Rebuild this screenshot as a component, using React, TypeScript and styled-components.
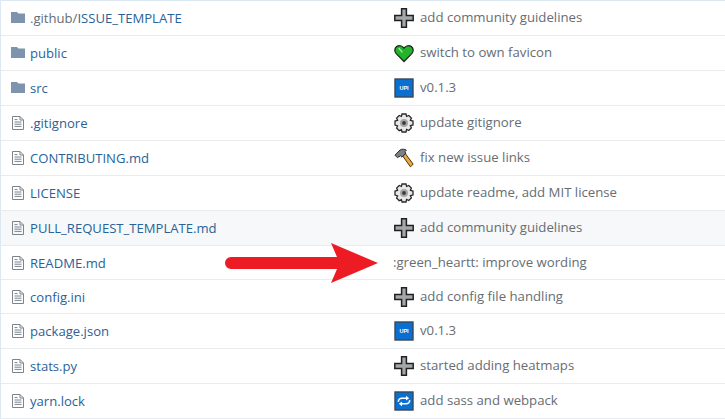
import React from 'react';
import styled, { createGlobalStyle } from 'styled-components';

type Emoji = 'plus' | 'heart' | 'package' | 'gear' | 'hammer' | 'loop';

type Entry = {
  name: string;
  prefix?: string;
  folder?: boolean;
  emoji?: Emoji;
  message: string;
  hovered?: boolean;
  compact?: boolean;
};

const entries: Entry[] = [
  { name: 'ISSUE_TEMPLATE', prefix: '.github/', folder: true, emoji: 'plus', message: 'add community guidelines' },
  { name: 'public', folder: true, emoji: 'heart', message: 'switch to own favicon' },
  { name: 'src', folder: true, emoji: 'package', message: 'v0.1.3' },
  { name: '.gitignore', emoji: 'gear', message: 'update gitignore' },
  { name: 'CONTRIBUTING.md', emoji: 'hammer', message: 'fix new issue links' },
  { name: 'LICENSE', emoji: 'gear', message: 'update readme, add MIT license' },
  { name: 'PULL_REQUEST_TEMPLATE.md', emoji: 'plus', message: 'add community guidelines', hovered: true },
  { name: 'README.md', message: ':green_heartt: improve wording', compact: true },
  { name: 'config.ini', emoji: 'plus', message: 'add config file handling', compact: true },
  { name: 'package.json', emoji: 'package', message: 'v0.1.3' },
  { name: 'stats.py', emoji: 'plus', message: 'started adding heatmaps' },
  { name: 'yarn.lock', emoji: 'loop', message: 'add sass and webpack' },
];

const GlobalStyle = createGlobalStyle`
  html, body {
    margin: 0;
    padding: 0;
    background: #fff;
    overflow: hidden;
  }
`;

const FileTable = styled.div`
  position: relative;
  width: 725px;
  height: 419px;
  box-sizing: border-box;
  border-top: 1px solid #dce8f2;
  border-left: 1px solid #dce8f2;
  font-family: 'Open Sans', 'Noto Sans', sans-serif;
  font-size: 13.1px;
  line-height: 20px;
`;

const Row = styled.div<{ $hovered?: boolean; $compact?: boolean }>`
  display: grid;
  grid-template-columns: 389px 1fr;
  align-items: center;
  height: ${p => (p.$compact ? '34px' : '35px')};
  box-sizing: border-box;
  border-bottom: 1px solid #e9ecef;
  background: ${p => (p.$hovered ? '#f6f8fa' : '#fff')};
`;

const NameCell = styled.div`
  display: flex;
  align-items: center;
  gap: 5px;
  padding-left: 10px;
  color: #2a6298;
`;

const FileIcon = styled.svg`
  flex: none;
  width: 14px;
  height: 16px;
`;

const Prefix = styled.span`
  color: #646c74;
`;

const MessageCell = styled.div`
  display: flex;
  align-items: center;
  gap: 6px;
  padding-left: 3px;
  color: #676d73;
  font-size: 13.2px;
`;

const MessageText = styled.span`
  padding-bottom: 2px;
`;

const EmojiIcon = styled.svg`
  flex: none;
  width: 20px;
  height: 20px;
  margin-left: 1px;
`;

const Arrow = styled.svg`
  position: absolute;
  left: 223px;
  top: 240px;
  width: 160px;
  height: 44px;
`;

const FolderGlyph = () => (
  <FileIcon viewBox="0 0 14 16">
    <path d="M0 2h6l1.5 1.6H14V13H0z" fill="#7e93ad" />
  </FileIcon>
);

const DocGlyph = () => (
  <FileIcon viewBox="0 0 14 16" fill="none" stroke="#7b838b" strokeWidth="1">
    <path d="M1.5 1.5h7.5l3.5 3.5v9.5h-11z" />
    <path d="M9 1.5v3.5h3.5M3.5 7h7M3.5 9.2h7M3.5 11.4h7M3.5 4.6h3" />
  </FileIcon>
);

const EmojiGlyph = ({ kind }: { kind: Emoji }) => {
  if (kind === 'plus') {
    return (
      <EmojiIcon viewBox="0 0 20 20">
        <path d="M7.6 .8h4.8v6.8h6.8v4.8h-6.8v6.8H7.6v-6.8H.8V7.6h6.8z" fill="#a5a7a8" stroke="#1f2123" strokeWidth="1.5" />
      </EmojiIcon>
    );
  }
  if (kind === 'heart') {
    return (
      <EmojiIcon viewBox="0 0 20 20">
        <path
          d="M10 18.5 2.2 10.6C.2 8.4.4 5.2 2.6 3.6c2.4-1.6 5.6-.9 7.4 1.6 1.8-2.5 5-3.2 7.4-1.6 2.2 1.6 2.4 4.8.4 7z"
          fill="#22b52c"
          stroke="#1c2b1c"
          strokeWidth="1.3"
        />
        <path d="M5 5.5l3 3.4" stroke="#a4e8a4" strokeWidth="1.4" strokeLinecap="round" />
      </EmojiIcon>
    );
  }
  if (kind === 'package') {
    return (
      <EmojiIcon viewBox="0 0 20 20">
        <rect x="1" y="1" width="18" height="18" fill="#0a6fd1" stroke="#37495a" strokeWidth="1.4" />
        <text x="10" y="12" textAnchor="middle" fontSize="5.5" fontWeight="700" fontFamily="'Liberation Sans', sans-serif" fill="#fff">
          UPI
        </text>
      </EmojiIcon>
    );
  }
  if (kind === 'gear') {
    return (
      <EmojiIcon viewBox="0 0 20 20">
        <path
          d="M8 1h4l.6 2.4 2.2-.9 2.6 2.6-1 2.2 2.6.7v4l-2.6.7 1 2.2-2.6 2.6-2.2-1L12 19H8l-.6-2.4-2.2 1-2.6-2.6 1-2.2L1 12V8l2.6-.7-1-2.2 2.6-2.6 2.2.9z"
          fill="#e8e8e8"
          stroke="#2a2a2a"
          strokeWidth="1.3"
        />
        <circle cx="10" cy="10" r="4" fill="#a6a6a6" />
        <circle cx="10" cy="10" r="1.9" fill="#3a3a3a" />
      </EmojiIcon>
    );
  }
  if (kind === 'hammer') {
    return (
      <EmojiIcon viewBox="0 0 20 20">
        <path d="M8 7l2.6-2.4 8.6 11.6-2.8 2.6z" fill="#eca83c" stroke="#4b3410" strokeWidth="1" />
        <path d="M1 7.2 6 2c2-1.2 4.4-1 6.4.2L10.8 3.8l1 1.4L8 9.2 6.6 7.8 3.4 9.6z" fill="#7b8084" stroke="#26292b" strokeWidth="1" />
      </EmojiIcon>
    );
  }
  return (
    <EmojiIcon viewBox="0 0 20 20">
      <rect x="1" y="1" width="18" height="18" fill="#0a6fd1" stroke="#37495a" strokeWidth="1.4" />
      <path
        d="M4.4 10.8c-.3-2.2 1.4-3.6 3.4-3.6h5M15.6 9.2c.3 2.2-1.4 3.6-3.4 3.6h-5"
        fill="none"
        stroke="#fff"
        strokeWidth="1.5"
      />
      <path d="M12 4.8l3.2 2.4-3.2 2.4zM8 10.4l-3.2 2.4L8 15.2z" fill="#fff" />
    </EmojiIcon>
  );
};

const App = () => (
  <FileTable>
    <GlobalStyle />
    {entries.map(entry => (
      <Row key={entry.name} $hovered={entry.hovered} $compact={entry.compact}>
        <NameCell>
          {entry.folder ? <FolderGlyph /> : <DocGlyph />}
          <span>
            {entry.prefix && <Prefix>{entry.prefix}</Prefix>}
            {entry.name}
          </span>
        </NameCell>
        <MessageCell>
          {entry.emoji && <EmojiGlyph kind={entry.emoji} />}
          <MessageText>{entry.message}</MessageText>
        </MessageCell>
      </Row>
    ))}
    <Arrow viewBox="0 0 160 44">
      <path d="M7 16H113L107 2 154 22 107 42 113 28H7a6 6 0 0 1 0-12z" fill="#ed1c24" />
    </Arrow>
  </FileTable>
);

export default App;
